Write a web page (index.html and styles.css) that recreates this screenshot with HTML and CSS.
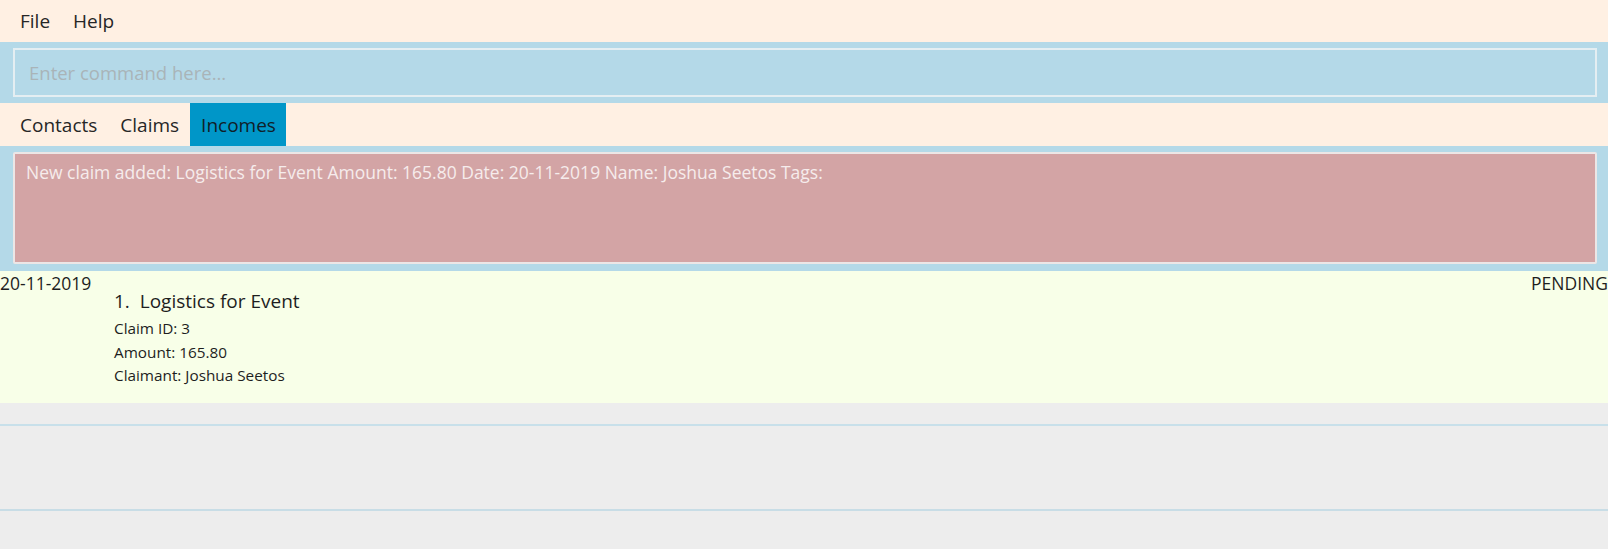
FILE: index.html
```html
<!DOCTYPE html>
<html>
<head>
<meta charset="utf-8">
<link rel="stylesheet" href="styles.css">
</head>
<body>
<div class="menubar">
  <span class="menu-item">File</span>
  <span class="menu-item">Help</span>
</div>
<div class="command-band">
  <div class="command-box">Enter command here...</div>
</div>
<div class="tabs">
  <span class="tab">Contacts</span>
  <span class="tab">Claims</span>
  <span class="tab tab-active">Incomes</span>
</div>
<div class="result-band">
  <div class="result-box">New claim added: Logistics for Event Amount: 165.80 Date: 20-11-2019 Name: Joshua Seetos Tags:</div>
</div>
<div class="card">
  <div class="card-date">20-11-2019</div>
  <div class="card-body">
    <div class="card-title">1.&nbsp;&nbsp;Logistics for Event</div>
    <div class="card-line">Claim ID: 3</div>
    <div class="card-line">Amount: 165.80</div>
    <div class="card-line">Claimant: Joshua Seetos</div>
  </div>
  <div class="card-status">PENDING</div>
</div>
<div class="gap-top"></div>
<div class="empty-panel"></div>
<div class="gap-bottom"></div>
</body>
</html>
```
FILE: styles.css
```css
html, body {
  margin: 0;
  padding: 0;
}
body {
  width: 1608px;
  height: 549px;
  overflow: hidden;
  background: #ededed;
  font-family: "Open Sans", "Noto Sans", sans-serif;
  color: #222;
}
.menubar {
  height: 42px;
  background: #fff0e3;
  display: flex;
  align-items: center;
  padding-left: 20px;
  gap: 23px;
  box-sizing: border-box;
}
.menu-item {
  font-size: 19px;
  color: #262626;
}
.command-band {
  height: 61px;
  background: #b4d9e8;
  padding: 6px 11px 6px 13px;
  box-sizing: border-box;
}
.command-box {
  height: 100%;
  box-sizing: border-box;
  border: 2px solid #e4eef2;
  padding-left: 14px;
  display: flex;
  align-items: center;
  font-size: 18.5px;
  color: #a9b4b8;
}
.tabs {
  height: 43px;
  background: #fff0e3;
  display: flex;
  align-items: stretch;
  padding-left: 8px;
}
.tab {
  display: flex;
  align-items: center;
  padding: 0 11px 0 12px;
  font-size: 19px;
  color: #262626;
}
.tab-active {
  background: #0096c8;
  color: #102028;
  padding: 0 10px 0 11px;
}
.result-band {
  height: 125px;
  background: #b4d9e8;
  padding: 6px 11px 7px 13px;
  box-sizing: border-box;
}
.result-box {
  height: 100%;
  box-sizing: border-box;
  border: 2px solid #ece6e6;
  border-radius: 2px;
  background: #d3a4a5;
  color: #f6ecec;
  font-size: 17.5px;
  line-height: 24px;
  padding: 6px 11px;
}
.card {
  height: 132px;
  background: #f8ffe8;
  display: flex;
  color: #1e1e1e;
}
.card-date {
  width: 114px;
  font-size: 17.5px;
  line-height: 24px;
}
.card-body {
  flex: 1;
  padding-top: 18px;
}
.card-title {
  font-size: 19px;
  line-height: 24px;
  margin-bottom: 4px;
}
.card-line {
  font-size: 15.3px;
  line-height: 23.5px;
}
.card-status {
  font-size: 17.5px;
  line-height: 24px;
}
.gap-top {
  height: 21px;
}
.empty-panel {
  height: 83px;
  border-top: 2px solid #c8e0ea;
  border-bottom: 2px solid #c8dde6;
}
```
